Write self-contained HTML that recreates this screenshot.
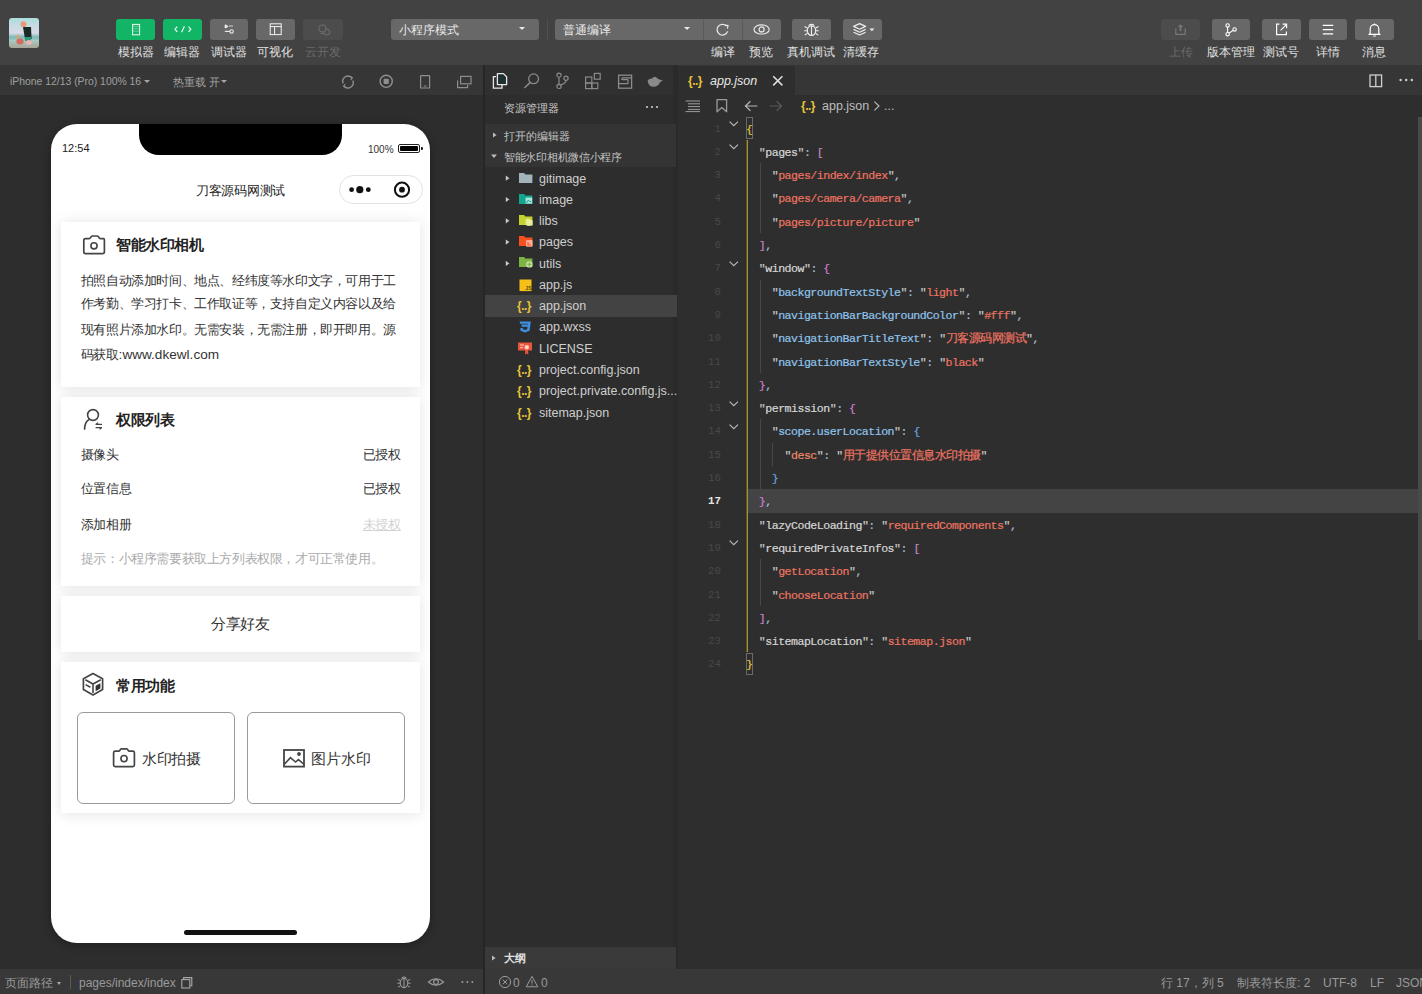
<!DOCTYPE html>
<html><head><meta charset="utf-8">
<style>
*{margin:0;padding:0;box-sizing:border-box}
html,body{width:1422px;height:994px;overflow:hidden;background:#2e2e2e;font-family:"Liberation Sans",sans-serif;color:#ccc}
.a{position:absolute}
#top{left:0;top:0;width:1422px;height:65px;background:#424242}
.tb{position:absolute;top:19px;height:21px;border-radius:3px;background:#686868}
.tb.g{background:#12b566}
.tb.d{background:#4c4c4c}
.lbl{position:absolute;top:45px;font-size:12px;line-height:14px;color:#e0e0e0;white-space:nowrap;text-align:center}
.lbl.d{color:#6a6a6a}
svg{position:absolute;overflow:visible}
#simhead{left:0;top:65px;width:483px;height:30px;background:#363636}
#simbody{left:0;top:95px;width:483px;height:874px;background:#2d2d2d}
#div1{left:483px;top:65px;width:2px;height:929px;background:#262626}
#exphead{left:485px;top:65px;width:193px;height:30px;background:#303030}
#expbody{left:485px;top:95px;width:188px;height:852px;background:#2d2d2d}
#div2{left:673px;top:65px;width:5px;height:904px;background:#2a2a2a}
#tabbar{left:678px;top:65px;width:744px;height:30px;background:#363636}
#tab{left:678px;top:66px;width:117px;height:29px;background:#2e2e2e}
#editor{left:678px;top:95px;width:744px;height:874px;background:#2e2e2e}
#status{left:0;top:969px;width:1422px;height:25px;background:#383838}
.st{position:absolute;top:976px;font-size:12px;line-height:14px;color:#9a9a9a;white-space:nowrap}
/* phone */
#phone{left:51px;top:124px;width:379px;height:819px;background:#fff;border-radius:26px;overflow:hidden;box-shadow:0 2px 10px rgba(0,0,0,.32)}
.card{position:absolute;left:10px;width:359px;background:#fff;box-shadow:0 1px 14px rgba(0,0,0,.115)}
.pt{position:absolute;font-size:13px;letter-spacing:-0.4px;line-height:16px;color:#333;white-space:nowrap}
/* explorer */
.ex{position:absolute;font-size:12.5px;line-height:16px;color:#cfcfcf;white-space:nowrap}
/* code */
.ln{position:absolute;left:690px;width:31px;text-align:right;font-family:"Liberation Mono",monospace;font-size:10.77px;color:#484848;height:23.3px;line-height:23.3px;padding-top:1px}
.cl{position:absolute;left:746px;font-family:"Liberation Mono",monospace;font-size:11.6px;letter-spacing:-0.52px;white-space:pre;height:23.3px;line-height:23.3px;color:#d4d4d4;padding-top:1px;-webkit-text-stroke:0.2px}
.k1{color:#d6d6d6}.k2{color:#8fc4ec}.k3{color:#ef8b6b}.s{color:#ef7462}.q{color:#c8c8c8}
.by{color:#e8c93a}.bp{color:#c586c0}.bb{color:#6aa6e0}
.cj{font-size:12px;letter-spacing:-0.5px}
.bq{color:#d17dd6}.p{color:#a9bfd0}.ln.cur{color:#e6e6e6;font-weight:bold}
.jb{color:#e8c53a;font-size:12px;letter-spacing:-0.5px;font-weight:bold}
</style></head><body>
<div id="top" class="a"></div>
<div id="simhead" class="a"></div>
<div id="simbody" class="a"></div>
<div id="exphead" class="a"></div>
<div id="expbody" class="a"></div>
<div id="div2" class="a"></div>
<div id="tabbar" class="a"></div>
<div id="tab" class="a"></div>
<div id="editor" class="a" style="top:95px"></div>
<div id="status" class="a"></div>
<div id="div1" class="a"></div>

<!-- TOP TOOLBAR -->
<svg style="left:9px;top:18px" width="30" height="30" viewBox="0 0 30 30"><defs><clipPath id="avc"><rect x="0" y="0" width="30" height="30" rx="3"/></clipPath><filter id="avb"><feGaussianBlur stdDeviation="0.7"/></filter><linearGradient id="avg" x1="0" y1="0" x2="0" y2="1"><stop offset="0" stop-color="#a6dedb"/><stop offset="0.5" stop-color="#dcdbe8"/><stop offset="0.62" stop-color="#7ab8b8"/><stop offset="0.72" stop-color="#a8c8c0"/><stop offset="1" stop-color="#a89a8c"/></linearGradient></defs><g clip-path="url(#avc)"><g filter="url(#avb)">
<rect x="-2" y="-2" width="34" height="34" fill="url(#avg)"/>
<circle cx="14.5" cy="6.2" r="3" fill="#e89a78"/><path d="M14 9 H22 L22.6 21 H16 Z" fill="#1e2a28"/><rect x="16" y="19" width="6" height="4" fill="#2c9a78"/><ellipse cx="11" cy="23.6" rx="3.6" ry="3" fill="#d76a5c"/><circle cx="9" cy="19" r="2" fill="#c9a77a"/><ellipse cx="20" cy="24.5" rx="3" ry="2.4" fill="#e7b7b7"/></g></g></svg>

<div class="tb g" style="left:116px;width:39px"></div>
<div class="tb g" style="left:163px;width:39px"></div>
<div class="tb" style="left:210px;width:38px"></div>
<div class="tb" style="left:256px;width:39px"></div>
<div class="tb d" style="left:303px;width:40px"></div>
<div class="lbl" style="left:110px;width:52px">模拟器</div>
<div class="lbl" style="left:156px;width:52px">编辑器</div>
<div class="lbl" style="left:203px;width:52px">调试器</div>
<div class="lbl" style="left:249px;width:52px">可视化</div>
<div class="lbl d" style="left:297px;width:52px">云开发</div>

<div class="tb" style="left:391px;width:148px"></div>
<div class="a" style="left:399px;top:23px;font-size:12px;line-height:14px;color:#e8e8e8">小程序模式</div>
<div class="a" style="left:547px;top:19px;width:1px;height:21px;background:#505050"></div>
<div class="tb" style="left:555px;width:226px"></div>
<div class="a" style="left:703px;top:19px;width:1px;height:21px;background:#5a5a5a"></div>
<div class="a" style="left:742px;top:19px;width:1px;height:21px;background:#5a5a5a"></div>
<div class="a" style="left:563px;top:23px;font-size:12px;line-height:14px;color:#e8e8e8">普通编译</div>
<div class="tb" style="left:792px;width:39px"></div>
<div class="tb" style="left:843px;width:39px"></div>
<div class="lbl" style="left:698px;width:50px">编译</div>
<div class="lbl" style="left:736px;width:50px">预览</div>
<div class="lbl" style="left:781px;width:60px">真机调试</div>
<div class="lbl" style="left:831px;width:60px">清缓存</div>

<div class="tb d" style="left:1161px;width:39px"></div>
<div class="tb" style="left:1212px;width:38px"></div>
<div class="tb" style="left:1262px;width:39px"></div>
<div class="tb" style="left:1309px;width:38px"></div>
<div class="tb" style="left:1355px;width:39px"></div>
<div class="lbl d" style="left:1155px;width:52px">上传</div>
<div class="lbl" style="left:1201px;width:60px">版本管理</div>
<div class="lbl" style="left:1255px;width:52px">测试号</div>
<div class="lbl" style="left:1302px;width:52px">详情</div>
<div class="lbl" style="left:1348px;width:52px">消息</div>

<!-- top icons -->
<svg style="left:116px;top:19px" width="39" height="21"><rect x="16.6" y="5.4" width="7" height="10.4" fill="none" stroke="#f0fff6" stroke-width="1"/><path d="M16.6 7.4 H23.6 M16.6 9.8 H23.6 M16.6 12.2 H23.6" stroke="#8fe0b8" stroke-width="0.6"/></svg>
<svg style="left:163px;top:19px" width="39" height="21"><path d="M14.2 7.6 L12 10.2 L14.2 12.8 M25.6 7.6 L27.8 10.2 L25.6 12.8 M21.4 7.2 L18.6 13.2" fill="none" stroke="#e6fff0" stroke-width="1.2"/></svg>
<svg style="left:210px;top:19px" width="38" height="21"><path d="M14.6 6.6 Q14.6 4.8 16.4 5.8 L18.6 7.4 L16.4 9 Q14.6 10 14.6 8.2 Z" fill="#e8e8e8"/><path d="M19 7 H23" stroke="#cfcfcf" stroke-width="1"/><path d="M14.8 12.4 H20" stroke="#e8e8e8" stroke-width="1.2"/><circle cx="21.6" cy="12.4" r="1.7" fill="none" stroke="#e8e8e8" stroke-width="1.1"/></svg>
<svg style="left:256px;top:19px" width="39" height="21"><rect x="14.2" y="4.8" width="11" height="10.8" fill="none" stroke="#f4f4f4" stroke-width="1"/><path d="M14.2 7.6 H25.2 M18.6 7.6 V15.6" stroke="#f4f4f4" stroke-width="1"/></svg>
<svg style="left:303px;top:19px" width="40" height="21"><circle cx="19.4" cy="9.4" r="3.4" fill="none" stroke="#6c6c6c" stroke-width="1.1"/><path d="M22.6 10.6 A2.8 2.8 0 1 1 21.4 14.4 H17.6" fill="none" stroke="#6c6c6c" stroke-width="1.1"/></svg>
<div class="a" style="left:519px;top:27px;width:0;height:0;border-left:3px solid transparent;border-right:3px solid transparent;border-top:3.5px solid #e8e8e8"></div>
<div class="a" style="left:684px;top:27px;width:0;height:0;border-left:3px solid transparent;border-right:3px solid transparent;border-top:3.5px solid #e8e8e8"></div>
<svg style="left:703px;top:19px" width="39" height="21"><path d="M23.4 7 A5.4 5.4 0 1 0 24.6 12.4" fill="none" stroke="#e8e8e8" stroke-width="1.3"/><path d="M22 6.2 L25 6.6 L24.4 9.6" fill="none" stroke="#e8e8e8" stroke-width="1.2"/></svg>
<svg style="left:742px;top:19px" width="39" height="21"><ellipse cx="19.6" cy="10.4" rx="7.6" ry="4.6" fill="none" stroke="#e8e8e8" stroke-width="1.2"/><circle cx="19.6" cy="10.4" r="2.5" fill="none" stroke="#e8e8e8" stroke-width="1.2"/></svg>
<svg style="left:792px;top:19px" width="39" height="21"><ellipse cx="19.5" cy="11.6" rx="4.2" ry="4.8" fill="none" stroke="#eee" stroke-width="1.2"/><path d="M19.5 7 V16.4 M16.6 6.6 Q19.5 4.2 22.4 6.6 M15.2 9 L12.6 7.6 M23.8 9 L26.4 7.6 M15.2 11.8 H12.2 M23.8 11.8 H26.8 M15.4 14.4 L12.8 16 M23.6 14.4 L26.2 16" fill="none" stroke="#eee" stroke-width="1.1"/></svg>
<svg style="left:843px;top:19px" width="39" height="21"><path d="M10.6 7.4 L16.6 4.6 L22.6 7.4 L16.6 10.2 Z M10.6 10.4 L16.6 13.2 L22.6 10.4 M10.6 13.2 L16.6 16 L22.6 13.2" fill="none" stroke="#eee" stroke-width="1.2" stroke-linejoin="round"/><path d="M26.4 9.4 H31.4 L28.9 12.2 Z" fill="#eee"/></svg>
<svg style="left:1161px;top:19px" width="39" height="21"><path d="M14.8 9.6 V15.4 H24.2 V9.6" fill="none" stroke="#777" stroke-width="1.2"/><path d="M19.5 5.2 L16.8 8 H18.6 V12 H20.4 V8 H22.2 Z" fill="#777"/></svg>
<svg style="left:1212px;top:19px" width="38" height="21"><circle cx="15.6" cy="6.4" r="1.7" fill="none" stroke="#fff" stroke-width="1.1"/><circle cx="15.6" cy="15.2" r="1.7" fill="none" stroke="#fff" stroke-width="1.1"/><circle cx="22.6" cy="10.4" r="1.7" fill="none" stroke="#fff" stroke-width="1.1"/><path d="M15.6 8.1 V13.5 M16.9 14.2 L21.2 11.4" stroke="#fff" stroke-width="1.1" fill="none"/></svg>
<svg style="left:1262px;top:19px" width="39" height="21"><path d="M17.4 5.2 H14.6 V15.6 H24.4 V12.6" fill="none" stroke="#fff" stroke-width="1.2"/><path d="M18.6 11.4 L24.4 5.6 M20.6 5.2 H24.6 V9.2" fill="none" stroke="#fff" stroke-width="1.2"/></svg>
<svg style="left:1309px;top:19px" width="38" height="21"><path d="M13.8 6.4 H24.2 M13.8 10.6 H24.2 M13.8 14.8 H24.2" stroke="#fff" stroke-width="1.3"/></svg>
<svg style="left:1355px;top:19px" width="39" height="21"><path d="M15.2 14.4 V10 A4.3 4.3 0 0 1 23.8 10 V14.4 L25 15.4 H14 Z" fill="none" stroke="#fff" stroke-width="1.2" stroke-linejoin="round"/><path d="M19.5 4.4 V5.8 M18.2 17 H20.8" stroke="#fff" stroke-width="1.2"/></svg>

<!-- SIM HEADER -->
<div class="a" style="left:10px;top:75px;font-size:10.4px;line-height:14px;color:#a0a0a0;white-space:nowrap">iPhone 12/13 (Pro) 100% 16</div>
<div class="a" style="left:143.5px;top:80px;width:0;height:0;border-left:3.2px solid transparent;border-right:3.2px solid transparent;border-top:3.8px solid #a6a6a6"></div>
<div class="a" style="left:173px;top:75px;font-size:11px;line-height:14px;color:#a0a0a0;white-space:nowrap">热重载 开</div>
<div class="a" style="left:220.8px;top:80px;width:0;height:0;border-left:3.2px solid transparent;border-right:3.2px solid transparent;border-top:3.8px solid #a6a6a6"></div>
<svg style="left:340px;top:74px" width="16" height="16"><path d="M3.2 9.4 A5.2 5.2 0 0 1 11.6 3.6" fill="none" stroke="#8e8e8e" stroke-width="1.4"/><path d="M12.8 6.6 A5.2 5.2 0 0 1 4.4 12.4" fill="none" stroke="#8e8e8e" stroke-width="1.4"/><path d="M10 2.4 L12.4 3.8 L10.8 6" fill="none" stroke="#8e8e8e" stroke-width="1.2"/><path d="M6 13.6 L3.6 12.2 L5.2 10" fill="none" stroke="#8e8e8e" stroke-width="1.2"/></svg>
<svg style="left:378px;top:73px" width="16" height="16"><circle cx="8.2" cy="8.3" r="6.1" fill="none" stroke="#8e8e8e" stroke-width="1.4"/><rect x="5.6" y="5.7" width="5.2" height="5.2" rx="1" fill="#8e8e8e"/></svg>
<svg style="left:418px;top:73px" width="14" height="18"><rect x="2.6" y="2.6" width="9" height="12.4" rx="0.6" fill="none" stroke="#8e8e8e" stroke-width="1.2"/><path d="M5.8 13 H8.4" stroke="#8e8e8e" stroke-width="1"/></svg>
<svg style="left:455px;top:74px" width="18" height="16"><path d="M2.6 6.4 V13.6 H12.6 V11" fill="none" stroke="#8e8e8e" stroke-width="1.2"/><rect x="5.6" y="2.4" width="10.4" height="7.4" fill="none" stroke="#8e8e8e" stroke-width="1.2"/></svg>

<!-- EXPLORER -->
<svg style="left:491px;top:72px" width="18" height="18"><path d="M5 4.6 H2.4 V16.2 H11 V13" fill="none" stroke="#e6e6e6" stroke-width="1.3"/><path d="M6.4 1.6 H12.4 L15.6 4.8 V12.6 H6.4 Z" fill="#1d2f2f" stroke="#e6e6e6" stroke-width="1.3" stroke-linejoin="round"/></svg>
<svg style="left:522px;top:72px" width="18" height="18"><circle cx="11.6" cy="6.8" r="4.9" fill="none" stroke="#8a8a8a" stroke-width="1.3"/><path d="M8.2 10.4 L2.4 16" stroke="#8a8a8a" stroke-width="1.5"/></svg>
<svg style="left:554px;top:72px" width="16" height="18"><circle cx="5" cy="3.2" r="2.1" fill="none" stroke="#8a8a8a" stroke-width="1.2"/><circle cx="5" cy="14.4" r="2.1" fill="none" stroke="#8a8a8a" stroke-width="1.2"/><circle cx="12" cy="6.2" r="2.1" fill="none" stroke="#8a8a8a" stroke-width="1.2"/><path d="M5 5.3 V12.3 M12 8.3 Q12 11.4 6.6 12.8" fill="none" stroke="#8a8a8a" stroke-width="1.2"/></svg>
<svg style="left:584px;top:72px" width="18" height="18"><rect x="1.6" y="5" width="6.2" height="6" fill="none" stroke="#8a8a8a" stroke-width="1.2"/><rect x="1.6" y="11" width="6.2" height="5.6" fill="none" stroke="#8a8a8a" stroke-width="1.2"/><rect x="7.8" y="11" width="6" height="5.6" fill="none" stroke="#8a8a8a" stroke-width="1.2"/><rect x="10.4" y="1.4" width="5.8" height="5.8" fill="none" stroke="#8a8a8a" stroke-width="1.2"/></svg>
<svg style="left:617px;top:74px" width="16" height="16"><rect x="1.6" y="1.2" width="13" height="13" fill="none" stroke="#8a8a8a" stroke-width="1.3"/><path d="M14.6 3.9 H5.6 Q4.8 3.9 4.8 4.8 V5 Q4.8 5.7 5.6 5.7 H10.4 Q11 5.7 11 6.4 V9 Q11 9.6 10.4 9.6 H1.6" fill="none" stroke="#8a8a8a" stroke-width="1.3"/></svg>
<svg style="left:646px;top:74px" width="18" height="14"><path d="M1.6 6.4 Q3 4.6 6 4.4 Q8.6 1.6 10.4 3.4 Q12 4.8 13.4 5.6 L16.8 6.4 L14 8.2 Q12.4 12.6 7.6 12.8 Q2.2 12.6 1.6 6.4 Z" fill="#8a8a8a"/></svg>

<div class="ex" style="left:504px;top:100px;font-size:11.4px;color:#c8c8c8">资源管理器</div>
<svg style="left:645px;top:105px" width="16" height="4"><circle cx="2" cy="2" r="1.1" fill="#c8c8c8"/><circle cx="7" cy="2" r="1.1" fill="#c8c8c8"/><circle cx="12" cy="2" r="1.1" fill="#c8c8c8"/></svg>
<div class="a" style="left:485px;top:124px;width:191px;height:43px;background:#343434"></div>
<svg style="left:491px;top:131px" width="8" height="8"><path d="M2 1.4 L5.6 4 L2 6.6 Z" fill="#bbb"/></svg>
<div class="ex" style="left:504px;top:127.5px;font-size:11px;color:#c4c4c4">打开的编辑器</div>
<svg style="left:490px;top:152px" width="8" height="8"><path d="M1 2.4 L7 2.4 L4 6 Z" fill="#bbb"/></svg>
<div class="ex" style="left:504px;top:148.5px;font-size:11px;letter-spacing:-0.3px;color:#c4c4c4">智能水印相机微信小程序</div>

<div class="a" style="left:485px;top:295px;width:192px;height:22px;background:#434343"></div>
<svg style="left:504px;top:174px" width="8" height="128"><path d="M1.8 1.6 L5.4 4.2 L1.8 6.8 Z M1.8 22.9 L5.4 25.5 L1.8 28.1 Z M1.8 44.2 L5.4 46.8 L1.8 49.4 Z M1.8 65.5 L5.4 68.1 L1.8 70.7 Z M1.8 86.8 L5.4 89.4 L1.8 92 Z" fill="#c8c8c8"/></svg>
<!-- folder icons -->
<svg style="left:518px;top:171px" width="16" height="14"><path d="M1 2 H6 L7.4 3.6 H14.4 V12 H1 Z" fill="#a3b3bc"/></svg>
<svg style="left:518px;top:192px" width="16" height="14"><path d="M1 2 H6 L7.4 3.6 H14.4 V12 H1 Z" fill="#13a58e"/><rect x="7.6" y="5.6" width="6.6" height="6" fill="#a8e6df"/><path d="M8.4 10.8 L10.4 8.2 L12.2 10 L13.4 8.8" stroke="#1d9a8f" stroke-width="1" fill="none"/></svg>
<svg style="left:518px;top:213px" width="16" height="14"><path d="M1 2 H6 L7.4 3.6 H14.4 V12 H1 Z" fill="#c5d22e"/><path d="M7.6 6.6 L10 5.6 L14.6 7.4 V12.6 L10 13 L7.6 12 Z" fill="#e6ee9c"/></svg>
<svg style="left:518px;top:234px" width="16" height="14"><path d="M1 2 H6 L7.4 3.6 H14.4 V12 H1 Z" fill="#f4511e"/><rect x="8" y="6" width="6.6" height="6.8" rx="1" fill="#ffab91"/><path d="M10 8 V11 H12.6" stroke="#f4511e" stroke-width="1.1" fill="none"/></svg>
<svg style="left:518px;top:255px" width="16" height="14"><path d="M1 2 H6 L7.4 3.6 H14.4 V12 H1 Z" fill="#7cb342"/><circle cx="11.4" cy="9.4" r="3.2" fill="#c5e1a5"/><path d="M11.4 7.4 V11.4 M9.4 9.4 H13.4" stroke="#7cb342" stroke-width="1.2"/></svg>
<svg style="left:519px;top:279px" width="14" height="13"><rect x="0.5" y="0.5" width="12" height="11.6" fill="#f5c118"/><text x="6.2" y="10.6" font-size="5.4" font-family="Liberation Sans" font-weight="bold" fill="#5a4a10">JS</text></svg>
<div class="ex jb" style="left:517px;top:298px">{..}</div>
<svg style="left:518px;top:320px" width="14" height="14"><path d="M1.6 1.6 H12.8 L11.6 10.8 L7 12.6 L2.6 10.8 L2.3 8 H4.8 L5 9.2 L7 9.9 L9.2 9.2 L9.5 6.8 H3.8 L3.5 4.4 H9.8 L10 3.8 H2.1 Z" fill="#3f8fe0"/></svg>
<svg style="left:517px;top:341px" width="16" height="15"><path d="M1 1.6 H15 V9.6 H11 L11.4 13.6 L9.6 12.4 L8 13.6 L8.2 9.6 H1 Z" fill="#e8553b"/><path d="M3 4 H7 M3 6.6 H6" stroke="#ffd0c4" stroke-width="1"/><circle cx="9.8" cy="6.2" r="2.2" fill="#ffd0c4"/></svg>
<div class="ex jb" style="left:517px;top:362px">{..}</div>
<div class="ex jb" style="left:517px;top:383px">{..}</div>
<div class="ex jb" style="left:517px;top:405px">{..}</div>

<div class="ex" style="left:539px;top:170.8px">gitimage</div>
<div class="ex" style="left:539px;top:191.9px">image</div>
<div class="ex" style="left:539px;top:213px">libs</div>
<div class="ex" style="left:539px;top:234.3px">pages</div>
<div class="ex" style="left:539px;top:255.5px">utils</div>
<div class="ex" style="left:539px;top:277px">app.js</div>
<div class="ex" style="left:539px;top:298px">app.json</div>
<div class="ex" style="left:539px;top:319.3px">app.wxss</div>
<div class="ex" style="left:539px;top:340.5px">LICENSE</div>
<div class="ex" style="left:539px;top:362px">project.config.json</div>
<div class="ex" style="left:539px;top:383px">project.private.config.js...</div>
<div class="ex" style="left:539px;top:404.5px">sitemap.json</div>

<div class="a" style="left:485px;top:947px;width:191px;height:22px;background:#3a3a3a"></div>
<svg style="left:490px;top:954px" width="8" height="8"><path d="M2 1.4 L5.6 4 L2 6.6 Z" fill="#bbb"/></svg>
<div class="ex" style="left:504px;top:950px;font-size:11px;color:#e0e0e0;font-weight:bold">大纲</div>

<!-- EDITOR -->
<div class="a" style="left:748px;top:489.3px;width:670px;height:23.3px;background:#444444"></div>
<div class="a" style="left:746px;top:139.8px;width:1px;height:512.6px;background:#5c5430"></div><div class="a" style="left:747px;top:139.8px;width:1px;height:512.6px;background:#a6922e"></div>
<div class="a" style="left:759.5px;top:163.1px;width:1px;height:69.9px;background:#474747"></div>
<div class="a" style="left:759.5px;top:279.6px;width:1px;height:93.2px;background:#474747"></div>
<div class="a" style="left:759.5px;top:419.4px;width:1px;height:69.9px;background:#474747"></div>
<div class="a" style="left:759.5px;top:559.2px;width:1px;height:46.6px;background:#474747"></div>
<div class="a" style="left:772.4px;top:442.7px;width:1px;height:23.3px;background:#474747"></div>
<div class="a" style="left:746px;top:117.0px;width:7px;height:22px;border:1px solid #6a6a6a"></div>
<div class="a" style="left:746px;top:652.9px;width:7px;height:22px;border:1px solid #6a6a6a"></div>
<div class="ln" style="top:116.5px">1</div>
<div class="cl" style="top:116.5px"><span class="by">{</span></div>
<div class="ln" style="top:139.8px">2</div>
<div class="cl" style="top:139.8px"><span class="q">  "</span><span class="k1">pages</span><span class="q">"</span><span class="p">: </span><span class="bp">[</span></div>
<div class="ln" style="top:163.1px">3</div>
<div class="cl" style="top:163.1px"><span class="q">    "</span><span class="s">pages/index/index</span><span class="q">"</span><span class="p">,</span></div>
<div class="ln" style="top:186.4px">4</div>
<div class="cl" style="top:186.4px"><span class="q">    "</span><span class="s">pages/camera/camera</span><span class="q">"</span><span class="p">,</span></div>
<div class="ln" style="top:209.7px">5</div>
<div class="cl" style="top:209.7px"><span class="q">    "</span><span class="s">pages/picture/picture</span><span class="q">"</span></div>
<div class="ln" style="top:233.0px">6</div>
<div class="cl" style="top:233.0px"><span class="bp">  ]</span><span class="p">,</span></div>
<div class="ln" style="top:256.3px">7</div>
<div class="cl" style="top:256.3px"><span class="q">  "</span><span class="k1">window</span><span class="q">"</span><span class="p">: </span><span class="bq">{</span></div>
<div class="ln" style="top:279.6px">8</div>
<div class="cl" style="top:279.6px"><span class="q">    "</span><span class="k2">backgroundTextStyle</span><span class="q">"</span><span class="p">: </span><span class="q">"</span><span class="s">light</span><span class="q">"</span><span class="p">,</span></div>
<div class="ln" style="top:302.9px">9</div>
<div class="cl" style="top:302.9px"><span class="q">    "</span><span class="k2">navigationBarBackgroundColor</span><span class="q">"</span><span class="p">: </span><span class="q">"</span><span class="s">#fff</span><span class="q">"</span><span class="p">,</span></div>
<div class="ln" style="top:326.2px">10</div>
<div class="cl" style="top:326.2px"><span class="q">    "</span><span class="k2">navigationBarTitleText</span><span class="q">"</span><span class="p">: </span><span class="q">"</span><span class="s cj">刀客源码网测试</span><span class="q">"</span><span class="p">,</span></div>
<div class="ln" style="top:349.5px">11</div>
<div class="cl" style="top:349.5px"><span class="q">    "</span><span class="k2">navigationBarTextStyle</span><span class="q">"</span><span class="p">: </span><span class="q">"</span><span class="s">black</span><span class="q">"</span></div>
<div class="ln" style="top:372.8px">12</div>
<div class="cl" style="top:372.8px"><span class="bq">  }</span><span class="p">,</span></div>
<div class="ln" style="top:396.1px">13</div>
<div class="cl" style="top:396.1px"><span class="q">  "</span><span class="k1">permission</span><span class="q">"</span><span class="p">: </span><span class="bq">{</span></div>
<div class="ln" style="top:419.4px">14</div>
<div class="cl" style="top:419.4px"><span class="q">    "</span><span class="k2">scope.userLocation</span><span class="q">"</span><span class="p">: </span><span class="bb">{</span></div>
<div class="ln" style="top:442.7px">15</div>
<div class="cl" style="top:442.7px"><span class="q">      "</span><span class="k3">desc</span><span class="q">"</span><span class="p">: </span><span class="q">"</span><span class="s cj">用于提供位置信息水印拍摄</span><span class="q">"</span></div>
<div class="ln" style="top:466.0px">16</div>
<div class="cl" style="top:466.0px"><span class="bb">    }</span></div>
<div class="ln cur" style="top:489.3px">17</div>
<div class="cl" style="top:489.3px"><span class="bq">  }</span><span class="p">,</span></div>
<div class="ln" style="top:512.6px">18</div>
<div class="cl" style="top:512.6px"><span class="q">  "</span><span class="k1">lazyCodeLoading</span><span class="q">"</span><span class="p">: </span><span class="q">"</span><span class="s">requiredComponents</span><span class="q">"</span><span class="p">,</span></div>
<div class="ln" style="top:535.9px">19</div>
<div class="cl" style="top:535.9px"><span class="q">  "</span><span class="k1">requiredPrivateInfos</span><span class="q">"</span><span class="p">: </span><span class="bp">[</span></div>
<div class="ln" style="top:559.2px">20</div>
<div class="cl" style="top:559.2px"><span class="q">    "</span><span class="s">getLocation</span><span class="q">"</span><span class="p">,</span></div>
<div class="ln" style="top:582.5px">21</div>
<div class="cl" style="top:582.5px"><span class="q">    "</span><span class="s">chooseLocation</span><span class="q">"</span></div>
<div class="ln" style="top:605.8px">22</div>
<div class="cl" style="top:605.8px"><span class="bp">  ]</span><span class="p">,</span></div>
<div class="ln" style="top:629.1px">23</div>
<div class="cl" style="top:629.1px"><span class="q">  "</span><span class="k1">sitemapLocation</span><span class="q">"</span><span class="p">: </span><span class="q">"</span><span class="s">sitemap.json</span><span class="q">"</span></div>
<div class="ln" style="top:652.4px">24</div>
<div class="cl" style="top:652.4px"><span class="by">}</span></div>
<svg style="left:728px;top:119.0px" width="12" height="10"><path d="M1.6 2.6 L5.8 6.6 L10 2.6" fill="none" stroke="#b8b8b8" stroke-width="1.2"/></svg>
<svg style="left:728px;top:142.3px" width="12" height="10"><path d="M1.6 2.6 L5.8 6.6 L10 2.6" fill="none" stroke="#b8b8b8" stroke-width="1.2"/></svg>
<svg style="left:728px;top:258.8px" width="12" height="10"><path d="M1.6 2.6 L5.8 6.6 L10 2.6" fill="none" stroke="#b8b8b8" stroke-width="1.2"/></svg>
<svg style="left:728px;top:398.6px" width="12" height="10"><path d="M1.6 2.6 L5.8 6.6 L10 2.6" fill="none" stroke="#b8b8b8" stroke-width="1.2"/></svg>
<svg style="left:728px;top:421.9px" width="12" height="10"><path d="M1.6 2.6 L5.8 6.6 L10 2.6" fill="none" stroke="#b8b8b8" stroke-width="1.2"/></svg>
<svg style="left:728px;top:538.4px" width="12" height="10"><path d="M1.6 2.6 L5.8 6.6 L10 2.6" fill="none" stroke="#b8b8b8" stroke-width="1.2"/></svg>
<!-- tab + breadcrumbs -->
<div class="a jb" style="left:688px;top:73px;font-size:12px;line-height:16px">{..}</div>
<div class="a" style="left:710px;top:73px;font-size:12.5px;line-height:16px;font-style:italic;color:#e8e8e8">app.json</div>
<svg style="left:771px;top:74px" width="14" height="14"><path d="M2.2 2.2 L11.4 11.4 M11.4 2.2 L2.2 11.4" stroke="#e0e0e0" stroke-width="1.5"/></svg>
<svg style="left:1368px;top:73px" width="16" height="16"><rect x="2" y="2" width="11.6" height="11.6" fill="none" stroke="#cfcfcf" stroke-width="1.3"/><path d="M7.8 2 V13.6" stroke="#cfcfcf" stroke-width="1.3"/></svg>
<svg style="left:1398px;top:78px" width="18" height="4"><circle cx="2.6" cy="2" r="1.2" fill="#cfcfcf"/><circle cx="8.2" cy="2" r="1.2" fill="#cfcfcf"/><circle cx="13.8" cy="2" r="1.2" fill="#cfcfcf"/></svg>
<svg style="left:684px;top:99px" width="18" height="14"><path d="M1.6 2 H16 M4 4.8 H16 M4 7.6 H16 M4 10.4 H16 M1.6 12.6 H16" stroke="#aaa" stroke-width="0.9"/></svg>
<svg style="left:714px;top:98px" width="16" height="16"><path d="M3 1.6 H12.6 V13.8 L7.8 9.6 L3 13.8 Z" fill="none" stroke="#9a9a9a" stroke-width="1.3" stroke-linejoin="round"/></svg>
<svg style="left:743px;top:99px" width="16" height="14"><path d="M14.4 7 H2.4 M7.4 2.2 L2.4 7 L7.4 11.8" fill="none" stroke="#b6b6b6" stroke-width="1.2"/></svg>
<svg style="left:768px;top:99px" width="16" height="14"><path d="M1.6 7 H13.6 M8.6 2.2 L13.6 7 L8.6 11.8" fill="none" stroke="#585858" stroke-width="1.2"/></svg>
<div class="a jb" style="left:801px;top:98px;font-size:12px;line-height:16px">{..}</div>
<div class="a" style="left:822px;top:98px;font-size:12.5px;line-height:16px;color:#bdbdbd;white-space:nowrap">app.json</div>
<svg style="left:872px;top:100px" width="10" height="12"><path d="M2.4 1.6 L7 6 L2.4 10.4" fill="none" stroke="#bdbdbd" stroke-width="1.1"/></svg>
<div class="a" style="left:884px;top:98px;font-size:12.5px;line-height:16px;color:#bdbdbd">...</div>
<div class="a" style="left:1418px;top:117px;width:4px;height:523px;background:#4a4a4a"></div>

<!-- STATUS BAR -->
<div class="st" style="left:5px">页面路径</div>
<div class="a" style="left:57px;top:982px;width:0;height:0;border-left:2.6px solid transparent;border-right:2.6px solid transparent;border-top:3px solid #a8a8a8"></div>
<div class="a" style="left:70px;top:975px;width:1px;height:14px;background:#5a5a5a"></div>
<div class="st" style="left:79px">pages/index/index</div>
<svg style="left:180px;top:976px" width="14" height="14"><path d="M3.6 3.6 V1.6 H11.8 V9.8 H9.8" fill="none" stroke="#a8a8a8" stroke-width="1.1"/><rect x="1.8" y="3.6" width="8" height="8.4" fill="none" stroke="#a8a8a8" stroke-width="1.1"/></svg>
<svg style="left:396px;top:974px" width="16" height="16"><ellipse cx="8" cy="9" rx="3.8" ry="4.6" fill="none" stroke="#9c9c9c" stroke-width="1.1"/><path d="M8 4.6 V13.6 M5.6 3.8 Q8 2 10.4 3.8 M4.2 6.6 L1.8 5.4 M11.8 6.6 L14.2 5.4 M4.2 9.2 H1.4 M11.8 9.2 H14.6 M4.4 11.8 L2 13.2 M11.6 11.8 L14 13.2" fill="none" stroke="#9c9c9c" stroke-width="1"/></svg>
<svg style="left:427px;top:975px" width="18" height="14"><path d="M1.4 7 Q9 0.4 16.6 7 Q9 13.6 1.4 7 Z" fill="none" stroke="#9c9c9c" stroke-width="1.1"/><circle cx="9" cy="7" r="2.4" fill="none" stroke="#9c9c9c" stroke-width="1.1"/></svg>
<svg style="left:460px;top:980px" width="16" height="4"><circle cx="2.4" cy="2" r="1" fill="#9c9c9c"/><circle cx="7.4" cy="2" r="1" fill="#9c9c9c"/><circle cx="12.4" cy="2" r="1" fill="#9c9c9c"/></svg>
<svg style="left:498px;top:975px" width="14" height="14"><circle cx="7" cy="7" r="5.6" fill="none" stroke="#9c9c9c" stroke-width="1"/><path d="M4.8 4.8 L9.2 9.2 M9.2 4.8 L4.8 9.2" stroke="#9c9c9c" stroke-width="1"/></svg>
<div class="st" style="left:513px">0</div>
<svg style="left:525px;top:975px" width="14" height="13"><path d="M7 1.4 L12.8 11.8 H1.2 Z" fill="none" stroke="#9c9c9c" stroke-width="1"/><path d="M7 5 V8.6 M7 9.6 V10.6" stroke="#9c9c9c" stroke-width="1"/></svg>
<div class="st" style="left:541px">0</div>
<div class="st" style="left:1161px">行 17，列 5</div>
<div class="st" style="left:1237px">制表符长度: 2</div>
<div class="st" style="left:1323px">UTF-8</div>
<div class="st" style="left:1370px">LF</div>
<div class="st" style="left:1396px">JSON</div>

<!-- PHONE -->
<div id="phone" class="a">
<div class="a" style="left:88px;top:0;width:203px;height:31px;background:#000;border-radius:0 0 20px 20px"></div>
<div class="a" style="left:11px;top:15.5px;font-size:11px;line-height:16px;color:#222">12:54</div>
<div class="a" style="left:317px;top:19px;font-size:10px;line-height:14px;color:#333">100%</div>
<div class="a" style="left:347px;top:20px;width:22px;height:9px;border:1.2px solid #222;border-radius:2px;padding:1px"><div style="width:100%;height:100%;background:#000;border-radius:1px"></div></div>
<div class="a" style="left:369.5px;top:23px;width:2px;height:3px;background:#222;border-radius:0 1px 1px 0"></div>
<div class="a" style="left:0;top:59px;width:379px;text-align:center;font-size:13px;letter-spacing:-0.3px;line-height:16px;color:#222">刀客源码网测试</div>
<div class="a" style="left:288px;top:51px;width:84px;height:29px;border:1px solid #e2e2e2;border-radius:15px;background:#fff"></div>
<svg style="left:288px;top:51px" width="84" height="29">
<circle cx="12.6" cy="14.7" r="2.4" fill="#111"/><circle cx="20.8" cy="14.7" r="3.6" fill="#111"/><circle cx="29.3" cy="14.7" r="2.4" fill="#111"/>
<circle cx="63" cy="14.7" r="7.1" fill="none" stroke="#111" stroke-width="2"/><circle cx="63" cy="14.7" r="2.9" fill="#111"/>
</svg>
<div class="card" style="top:98px;height:165px"></div>
<div class="card" style="top:273px;height:189px"></div>
<div class="card" style="top:472px;height:56px"></div>
<div class="card" style="top:538px;height:151px"></div>

<svg style="left:31px;top:111px" width="24" height="20" viewBox="0 0 24 20">
<path d="M1.8 5.2 Q1.8 3.6 3.4 3.6 H7.2 Q8 3.6 8.6 2.6 L9.2 1.6 Q9.6 1 10.4 1 H15.2 Q16 1 16.4 1.6 L17 2.6 Q17.6 3.6 18.4 3.6 H21.6 Q22.4 3.6 22.4 5.2 V17 Q22.4 18.6 20.8 18.6 H3.4 Q1.8 18.6 1.8 17 Z" fill="none" stroke="#444" stroke-width="1.7"/>
<circle cx="12" cy="10.8" r="3.1" fill="none" stroke="#444" stroke-width="1.6"/>
</svg>
<div class="a" style="left:65px;top:113px;font-size:15px;letter-spacing:-0.4px;line-height:16px;font-weight:bold;color:#222">智能水印相机</div>
<div class="pt" style="left:29.8px;top:148.5px">拍照自动添加时间、地点、经纬度等水印文字，可用于工</div>
<div class="pt" style="left:29.8px;top:172.4px">作考勤、学习打卡、工作取证等，支持自定义内容以及给</div>
<div class="pt" style="left:29.8px;top:197.7px">现有照片添加水印。无需安装，无需注册，即开即用。源</div>
<div class="pt" style="left:29.8px;top:223px">码获取<span style="font-size:13.6px;letter-spacing:0">:www.dkewl.com</span></div>

<svg style="left:31px;top:283px" width="22" height="24" viewBox="0 0 22 24">
<circle cx="11" cy="8" r="5.4" fill="none" stroke="#444" stroke-width="1.6"/>
<path d="M6.8 12.6 Q2.6 15.4 2.6 22" fill="none" stroke="#444" stroke-width="1.7" stroke-linecap="round"/>
<path d="M13.6 17.4 H20 M13.6 20.6 H20" stroke="#444" stroke-width="1.3"/>
<path d="M14 17.4 L16 15.8 M19.6 20.6 L17.6 22.2" stroke="#444" stroke-width="1.3"/>
</svg>
<div class="a" style="left:65px;top:287.5px;font-size:15px;letter-spacing:-0.4px;line-height:16px;font-weight:bold;color:#222">权限列表</div>
<div class="pt" style="left:29.8px;top:322.7px">摄像头</div>
<div class="pt" style="left:29.8px;top:357px">位置信息</div>
<div class="pt" style="left:29.8px;top:393px">添加相册</div>
<div class="pt" style="right:29.4px;top:322.7px">已授权</div>
<div class="pt" style="right:29.4px;top:357px">已授权</div>
<div class="pt" style="right:29.4px;top:393px;color:#d2d2d2;text-decoration:underline">未授权</div>
<div class="pt" style="left:29.8px;top:426.8px;color:#aaa">提示：小程序需要获取上方列表权限，才可正常使用。</div>

<div class="a" style="left:0;top:492px;width:379px;text-align:center;font-size:15px;letter-spacing:-0.1px;line-height:16px;color:#333">分享好友</div>

<svg style="left:31px;top:548px" width="22" height="25" viewBox="0 0 22 25">
<path d="M11 1.6 L20.6 6.8 V17.6 L11 23 L1.4 17.6 V6.8 Z" fill="none" stroke="#444" stroke-width="1.7" stroke-linejoin="round"/>
<path d="M3.4 7.8 L11 12 L18.8 7.8 M11 12 V21" fill="none" stroke="#444" stroke-width="1.6"/>
<path d="M3.6 12.6 L8.4 15.2" stroke="#444" stroke-width="1.6"/>
<path d="M13.6 13.8 L18.4 11.2 V16.6 L13.6 19.2 Z" fill="#333"/>
</svg>
<div class="a" style="left:65px;top:553.5px;font-size:15px;letter-spacing:-0.4px;line-height:16px;font-weight:bold;color:#222">常用功能</div>
<div class="a" style="left:26px;top:588px;width:158px;height:92px;border:1px solid #9a9a9a;border-radius:6px"></div>
<div class="a" style="left:196px;top:588px;width:158px;height:92px;border:1px solid #9a9a9a;border-radius:6px"></div>
<svg style="left:61px;top:624px" width="24" height="20" viewBox="0 0 24 20">
<path d="M1.6 4.8 Q1.6 3.2 3.2 3.2 H6.6 Q7.4 3.2 7.9 2.3 L8.4 1.4 Q8.8 0.8 9.6 0.8 H14.4 Q15.2 0.8 15.6 1.4 L16.1 2.3 Q16.6 3.2 17.4 3.2 H20.8 Q22.4 3.2 22.4 4.8 V17 Q22.4 18.6 20.8 18.6 H3.2 Q1.6 18.6 1.6 17 Z" fill="none" stroke="#444" stroke-width="1.7"/>
<circle cx="12" cy="10.6" r="3.1" fill="none" stroke="#444" stroke-width="1.6"/>
</svg>
<div class="a" style="left:90.8px;top:626.6px;font-size:15px;letter-spacing:-0.15px;line-height:16px;color:#333">水印拍摄</div>
<svg style="left:232px;top:625px" width="22" height="19" viewBox="0 0 22 19">
<rect x="1" y="1" width="20" height="16.6" fill="none" stroke="#444" stroke-width="1.8"/>
<path d="M1.6 15 L7.4 8.6 L12.6 13 L15.4 10.6 L20.6 15" fill="none" stroke="#444" stroke-width="1.6"/>
<circle cx="16" cy="5" r="1.9" fill="#444"/>
</svg>
<div class="a" style="left:260.4px;top:626.6px;font-size:15px;letter-spacing:-0.15px;line-height:16px;color:#333">图片水印</div>
<div class="a" style="left:133px;top:806px;width:113px;height:5px;border-radius:3px;background:#111"></div>
</div>

</body></html>
